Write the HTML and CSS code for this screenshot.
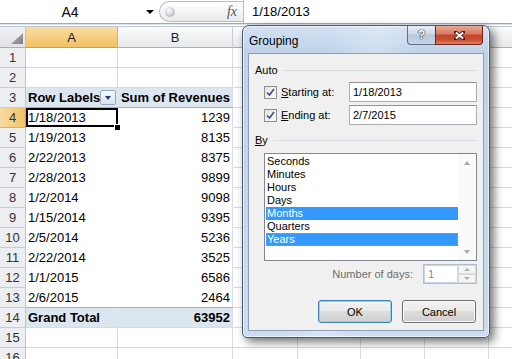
FILE: index.html
```html
<!DOCTYPE html>
<html>
<head>
<meta charset="utf-8">
<link rel="stylesheet" href="styles.css">
</head>
<body>
<div class="fbar">
  <div class="namebox"><span class="nb-text">A4</span><span class="nb-arrow"></span></div>
  <div class="fx-pill"><span class="grip"></span><span class="fx">fx</span></div>
  <div class="formula">1/18/2013</div>
</div>
<div class="fstrip"></div>

<div class="sheet">
  <div class="row hdr">
    <div class="corner"><span class="tri"></span></div>
    <div class="ch act">A</div><div class="ch">B</div><div class="ch"></div><div class="ch"></div><div class="ch"></div><div class="ch"></div><div class="ch"></div>
  </div>
  <div class="row"><div class="rh">1</div><div class="c"></div><div class="c"></div><div class="c"></div><div class="c"></div><div class="c"></div><div class="c"></div><div class="c"></div></div>
  <div class="row"><div class="rh">2</div><div class="c"></div><div class="c"></div><div class="c"></div><div class="c"></div><div class="c"></div><div class="c"></div><div class="c"></div></div>
  <div class="row"><div class="rh">3</div>
    <div class="c ph pa labels"><span>Row Labels</span><span class="filter"><span class="ftri"></span></span></div>
    <div class="c ph num">Sum of Revenues</div>
    <div class="c"></div><div class="c"></div><div class="c"></div><div class="c"></div><div class="c"></div></div>
  <div class="row"><div class="rh act">4</div><div class="c pv pa sel">1/18/2013</div><div class="c pv num">1239</div><div class="c"></div><div class="c"></div><div class="c"></div><div class="c"></div><div class="c"></div></div>
  <div class="row"><div class="rh">5</div><div class="c pv pa">1/19/2013</div><div class="c pv num">8135</div><div class="c"></div><div class="c"></div><div class="c"></div><div class="c"></div><div class="c"></div></div>
  <div class="row"><div class="rh">6</div><div class="c pv pa">2/22/2013</div><div class="c pv num">8375</div><div class="c"></div><div class="c"></div><div class="c"></div><div class="c"></div><div class="c"></div></div>
  <div class="row"><div class="rh">7</div><div class="c pv pa">2/28/2013</div><div class="c pv num">9899</div><div class="c"></div><div class="c"></div><div class="c"></div><div class="c"></div><div class="c"></div></div>
  <div class="row"><div class="rh">8</div><div class="c pv pa">1/2/2014</div><div class="c pv num">9098</div><div class="c"></div><div class="c"></div><div class="c"></div><div class="c"></div><div class="c"></div></div>
  <div class="row"><div class="rh">9</div><div class="c pv pa">1/15/2014</div><div class="c pv num">9395</div><div class="c"></div><div class="c"></div><div class="c"></div><div class="c"></div><div class="c"></div></div>
  <div class="row"><div class="rh">10</div><div class="c pv pa">2/5/2014</div><div class="c pv num">5236</div><div class="c"></div><div class="c"></div><div class="c"></div><div class="c"></div><div class="c"></div></div>
  <div class="row"><div class="rh">11</div><div class="c pv pa">2/22/2014</div><div class="c pv num">3525</div><div class="c"></div><div class="c"></div><div class="c"></div><div class="c"></div><div class="c"></div></div>
  <div class="row"><div class="rh">12</div><div class="c pv pa">1/1/2015</div><div class="c pv num">6586</div><div class="c"></div><div class="c"></div><div class="c"></div><div class="c"></div><div class="c"></div></div>
  <div class="row"><div class="rh">13</div><div class="c pl pa">2/6/2015</div><div class="c pl num">2464</div><div class="c"></div><div class="c"></div><div class="c"></div><div class="c"></div><div class="c"></div></div>
  <div class="row"><div class="rh">14</div><div class="c pt pa">Grand Total</div><div class="c pt num">63952</div><div class="c"></div><div class="c"></div><div class="c"></div><div class="c"></div><div class="c"></div></div>
  <div class="row"><div class="rh">15</div><div class="c"></div><div class="c"></div><div class="c"></div><div class="c"></div><div class="c"></div><div class="c"></div><div class="c"></div></div>
  <div class="row"><div class="rh">16</div><div class="c"></div><div class="c"></div><div class="c"></div><div class="c"></div><div class="c"></div><div class="c"></div><div class="c"></div></div>
</div>

<div class="dialog">
  <div class="titlebar">
    <span class="title">Grouping</span>
    <div class="caption-btns">
      <div class="cbtn help">?</div>
      <div class="cbtn close">
        <svg width="11" height="9" viewBox="0 0 11 9"><path d="M1.5 1.2 L9.5 7.8 M9.5 1.2 L1.5 7.8" stroke="#4a1a10" stroke-width="3.6" stroke-linecap="square" fill="none"/><path d="M1.8 1.5 L9.2 7.5 M9.2 1.5 L1.8 7.5" stroke="#fff" stroke-width="2" fill="none"/></svg>
      </div>
    </div>
  </div>
  <div class="panel">
    <div class="group-hd"><span>Auto</span><i class="rule"></i></div>
    <div class="frow first">
      <div class="chk"><span class="box"><svg width="11" height="11" viewBox="0 0 11 11"><path d="M2 5.5 L4.5 8 L9 2" stroke="#3b5488" stroke-width="1.7" fill="none"/></svg></span><span><u>S</u>tarting at:</span></div>
      <div class="input">1/18/2013</div>
    </div>
    <div class="frow">
      <div class="chk"><span class="box"><svg width="11" height="11" viewBox="0 0 11 11"><path d="M2 5.5 L4.5 8 L9 2" stroke="#3b5488" stroke-width="1.7" fill="none"/></svg></span><span><u>E</u>nding at:</span></div>
      <div class="input">2/7/2015</div>
    </div>
    <div class="group-hd by"><span><u>B</u>y</span><i class="rule"></i></div>
    <div class="listbox">
      <div class="items">
        <div class="item">Seconds</div>
        <div class="item">Minutes</div>
        <div class="item">Hours</div>
        <div class="item">Days</div>
        <div class="item on">Months</div>
        <div class="item">Quarters</div>
        <div class="item on focus">Years</div>
      </div>
      <div class="vscroll"><span class="arr up"></span><span class="arr down"></span></div>
    </div>
    <div class="days-row">
      <span class="days-label">Number of days:</span>
      <div class="spinner">
        <span class="spin-val">1</span>
        <div class="spin-btns"><span class="sb"><i class="arr up sm"></i></span><span class="sb"><i class="arr down sm"></i></span></div>
      </div>
    </div>
    <div class="btn-row">
      <button class="btn ok">OK</button>
      <button class="btn">Cancel</button>
    </div>
  </div>
</div>
</body>
</html>
```
FILE: styles.css
```css
* { box-sizing: border-box; }
html, body { margin: 0; padding: 0; }
body {
  width: 512px; height: 359px; overflow: hidden; position: relative;
  background: #fff; color: #000;
  font-family: "Liberation Sans", Arial, sans-serif; font-size: 13px;
}

/* formula bar */
.fbar { display: flex; align-items: center; height: 24px; border-bottom: 1px solid #a3a9b1; background: #fff; }
.namebox { width: 159px; height: 100%; display: flex; align-items: center; }
.nb-text { width: 140px; text-align: center; font-size: 14px; }
.nb-arrow { width: 0; height: 0; margin-left: 6px; border-left: 4px solid transparent; border-right: 4px solid transparent; border-top: 4px solid #000; }
.fx-pill {
  width: 84px; height: 21px; display: flex; align-items: center; padding-left: 5px;
  border: 1px solid #b9bcc0; border-right: none; border-radius: 11px 0 0 11px;
  background: linear-gradient(#ffffff, #e9eaec);
}
.grip { width: 10px; height: 10px; border-radius: 50%; background: radial-gradient(circle at 40% 35%, #ffffff, #c3c8cf 60%, #9ea6b1); }
.fx { margin-left: auto; margin-right: 6px; font-family: "Liberation Serif", serif; font-style: italic; font-size: 14px; color: #555; }
.formula { flex: 1; height: 100%; display: flex; align-items: center; padding-left: 8px; border-left: 1px solid #b9bcc0; }
.fstrip { height: 3px; background: linear-gradient(#dbe6f3 0 1px, #ffffff 1px 2px, #c2c6cc 2px); }

/* sheet grid */
.sheet { width: 512px; overflow: hidden; }
.row { display: grid; grid-template-columns: 26px 92px 115px 65px 63px 64px 64px 64px; height: 20px; }
.row.hdr { height: 21px; }
.corner { background: linear-gradient(#f0f1f3, #e1e3e6); border-right: 1px solid #c3c7cd; border-bottom: 1px solid #a9afb8; display: flex; align-items: flex-end; justify-content: flex-end; padding: 0 2px 3px 0; }
.tri { width: 12px; height: 11px; background: linear-gradient(135deg, #b9b9b9, #7d7d7d); clip-path: polygon(100% 0, 100% 100%, 0 100%); }
.ch { display: flex; align-items: center; justify-content: center; padding-top: 1px; color: #222;
  background: linear-gradient(#fafbfc, #e6e8eb); border-right: 1px solid #c9cdd3; border-bottom: 1px solid #a9afb8; }
.ch.act { background: linear-gradient(#f9dca4, #f2c262); border-right-color: #efa94e; border-bottom-color: #e49532; }
.rh { text-align: center; line-height: 19px; color: #333; background: #eceef1; border-right: 1px solid #c3c7cd; border-bottom: 1px solid #c9cdd3; }
.rh.act { background: linear-gradient(90deg, #f9dca4, #f2c262); border-right-color: #e49532; border-bottom-color: #efa94e; }
.c { border-right: 1px solid #d6dbe4; border-bottom: 1px solid #d6dbe4; line-height: 19px; padding: 0 2px; white-space: nowrap; }
.num { text-align: right; }
.pa { border-right-color: transparent; }
.pv { border-bottom-color: transparent; }
.pl { border-bottom-color: #95b3d7; }
.ph { background: #dce6f1; border-bottom-color: #95b3d7; font-weight: bold; }
.pt { background: #dce6f1; font-weight: bold; }
.labels { display: flex; align-items: center; justify-content: space-between; padding-right: 1px; }
.filter { width: 17px; height: 15px; border: 1px solid #92a9c6; border-radius: 2px; background: linear-gradient(#f7f9fc, #d8e2ee); display: flex; align-items: center; justify-content: center; }
.ftri { width: 0; height: 0; border-left: 3.5px solid transparent; border-right: 3.5px solid transparent; border-top: 4px solid #243f6b; }
.sel { position: relative; }
.sel::before { content: ""; position: absolute; left: 0; top: 0; right: -1px; bottom: 0; border: 2px solid #000; }
.sel::after { content: ""; position: absolute; right: -3px; bottom: -3px; width: 5px; height: 5px; background: #000; box-shadow: 0 0 0 1px #fff; }

/* dialog */
.dialog {
  position: absolute; left: 242px; top: 25px; width: 248px; height: 313px;
  display: flex; flex-direction: column; padding: 0 5px 6px;
  border: 1px solid #4d5867; border-radius: 7px 7px 5px 5px;
  background: linear-gradient(100deg, rgba(255,255,255,0) 30%, rgba(255,255,255,.25) 45%, rgba(255,255,255,0) 60%), linear-gradient(#d3e1f2, #bfd2ea 28px, #c5d7ed 60%, #cddcef);
  box-shadow: 4px 4px 10px rgba(0,0,0,.55), inset 0 0 0 1px rgba(255,255,255,.6);
  font-family: "Liberation Sans", Arial, sans-serif; font-size: 11px;
}
.titlebar { height: 27px; display: flex; align-items: flex-start; }
.title { font-size: 12px; line-height: 14px; margin: 8px 0 0 1px; }
.caption-btns { margin-left: auto; margin-right: 1px; display: flex; }
.cbtn { height: 19px; }
.help {
  width: 28px; border: 1px solid #5f6f84; border-top: none; border-right: none; border-radius: 0 0 0 4px;
  background: linear-gradient(#e8eef6, #cdd9e7 45%, #b6c6da 50%, #c8d6e6);
  color: #fff; font-weight: bold; font-size: 13px; line-height: 18px; text-align: center;
  text-shadow: 0 0 1px #2b2b2b, 0 0 1px #2b2b2b, 0 0 1px #2b2b2b;
}
.close {
  width: 48px; border: 1px solid #6a281c; border-top: none; border-radius: 0 0 4px 0;
  background: linear-gradient(#eaa996, #d9765f 45%, #c2452c 50%, #cd5035 80%, #e2866a);
  display: flex; align-items: center; justify-content: center;
}
.panel { flex: 1; display: flex; flex-direction: column; padding: 9px 6px 0; background: #f0f0f0; border: 1px solid #8f9fb5; }
.group-hd { display: flex; align-items: center; height: 14px; line-height: 14px; }
.group-hd.by { margin-top: 8px; }
.rule { flex: 1; height: 1px; margin-left: 5px; background: #d5dfe5; }
.frow { display: flex; align-items: center; height: 20px; margin-top: 3px; padding-left: 9px; }
.frow.first { margin-top: 5px; }
.chk { display: flex; align-items: center; gap: 4px; }
.box { width: 13px; height: 13px; border: 1px solid #8e8f8f; background: linear-gradient(135deg, #e4e4e4, #fcfcfc); display: flex; align-items: center; justify-content: center; }
.input { margin-left: auto; width: 128px; height: 20px; padding-left: 3px; line-height: 18px; background: #fff; border: 1px solid #abadb3; border-top-color: #8f9399; }
.listbox { margin: 6px 0 0 9px; width: 213px; height: 108px; display: flex; background: #fff; border: 1px solid #828790; }
.items { width: 193px; padding: 1px 0 0 1px; }
.item { height: 13px; line-height: 13px; padding-left: 1px; }
.item.on { background: #3399ff; color: #fff; }
.item.focus { outline: 1px dotted #d8893a; outline-offset: -1px; }
.vscroll { width: 18px; display: flex; flex-direction: column; justify-content: space-between; align-items: center; padding: 7px 0 6px; background: #fafafa; }
.arr { display: block; width: 0; height: 0; border-left: 3.5px solid transparent; border-right: 3.5px solid transparent; }
.arr.up { border-bottom: 4px solid #aaaaaa; }
.arr.down { border-top: 4px solid #aaaaaa; }
.arr.sm { border-left-width: 3px; border-right-width: 3px; border-top-width: 3px; border-bottom-width: 3px; }
.arr.sm.up { border-top: none; border-bottom-color: #b0b0b0; }
.arr.sm.down { border-bottom: none; border-top-color: #b0b0b0; }
.days-row { margin-top: 3px; height: 20px; display: flex; align-items: center; justify-content: flex-end; gap: 10px; }
.days-label { color: #6d6d6d; }
.spinner { width: 54px; height: 20px; display: flex; background: #fff; border: 1px solid #b4bcc6; }
.spin-val { flex: 1; padding-left: 3px; line-height: 16px; color: #8c8c8c; border: 1px solid #c2d8f0; }
.spin-btns { width: 18px; display: flex; flex-direction: column; }
.sb { flex: 1; display: flex; align-items: center; justify-content: center; background: #f4f4f4; border: 1px solid #dadada; }
.btn-row { margin: 16px 1px 0 0; display: flex; justify-content: flex-end; gap: 10px; }
.btn {
  width: 74px; height: 23px; padding: 0; border: 1px solid #707070; border-radius: 3px;
  background: linear-gradient(#f2f2f2, #ebebeb 45%, #dddddd 50%, #cfcfcf);
  box-shadow: inset 0 0 0 1px #fcfcfc;
  font-family: "Liberation Sans", Arial, sans-serif; font-size: 11px; color: #000;
}
.btn.ok { border-color: #3c7fb1; box-shadow: inset 0 0 0 1px #8fd3f5; }
```
